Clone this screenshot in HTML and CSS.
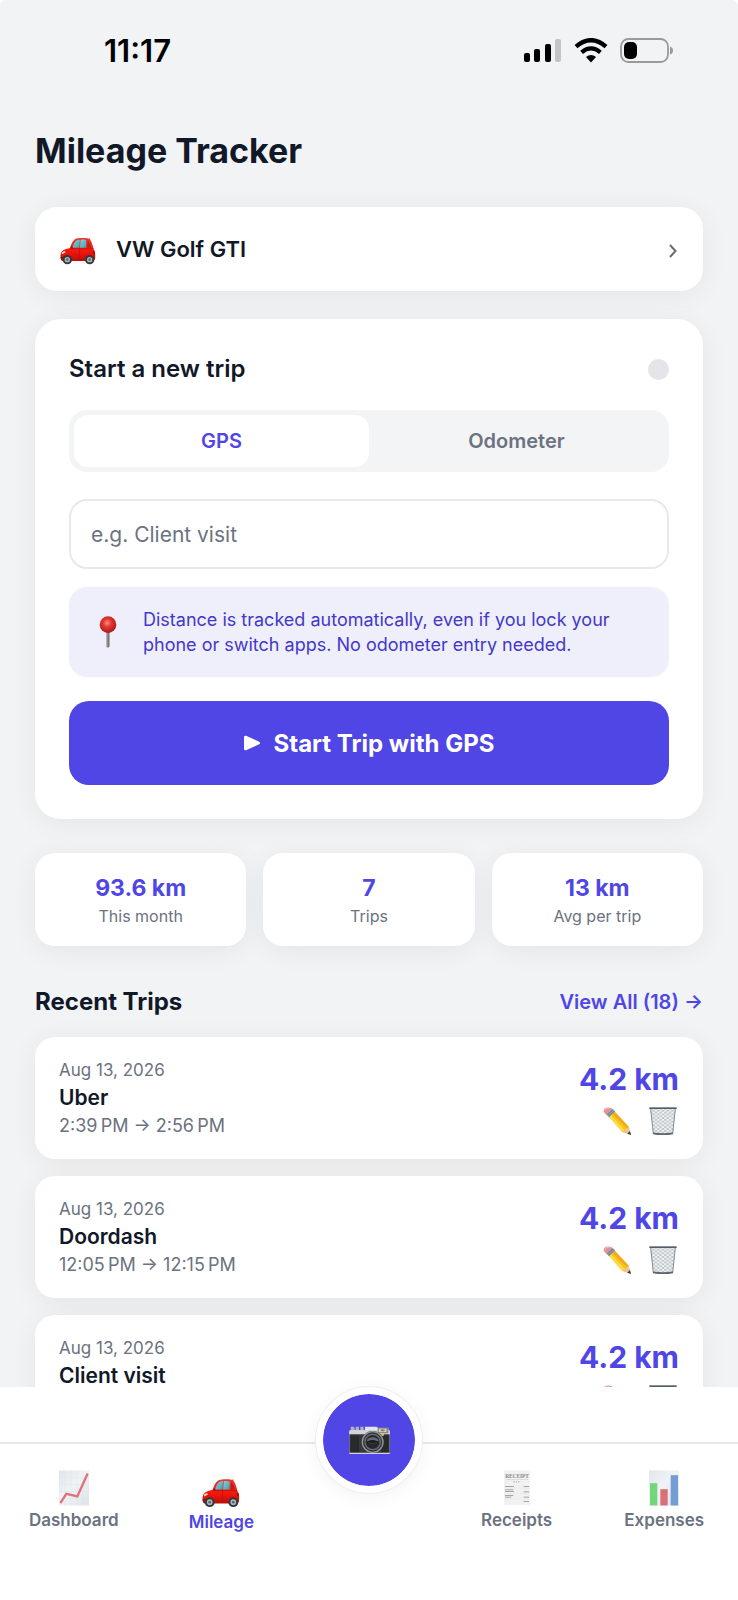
FILE: index.html
```html
<!DOCTYPE html>
<html lang="en">
<head>
<meta charset="utf-8">
<meta name="viewport" content="width=device-width, initial-scale=1">
<title>Mileage Tracker</title>
<link rel="stylesheet" href="styles.css">
</head>
<body>
<svg class="sprite" aria-hidden="true">
  <defs>
    <linearGradient id="red" x1="0" y1="0" x2="0" y2="1"><stop offset="0" stop-color="#e8392c"/><stop offset=".6" stop-color="#f3150c"/><stop offset="1" stop-color="#b90f0a"/></linearGradient>
    <linearGradient id="glass" x1="0" y1="0" x2="1" y2="1"><stop offset="0" stop-color="#8fd0d6"/><stop offset="1" stop-color="#3f9fb4"/></linearGradient>
    <radialGradient id="pinhead" cx=".45" cy=".4" r=".6"><stop offset="0" stop-color="#ff8d80"/><stop offset=".4" stop-color="#e23a35"/><stop offset="1" stop-color="#b3161a"/></radialGradient>
    <linearGradient id="paper" x1="0" y1="0" x2="1" y2="1"><stop offset="0" stop-color="#dfe6ec"/><stop offset=".45" stop-color="#f0f3f6"/><stop offset="1" stop-color="#dfe3e8"/></linearGradient>
    <pattern id="mesh" width="14" height="11" patternUnits="userSpaceOnUse"><path d="M0 0L14 11M14 0L0 11" stroke="#8b949c" stroke-width="1.6"/></pattern>
  </defs>
  <symbol id="car" viewBox="0 0 108 82">
    <path d="M88 2v12" stroke="#a33" stroke-width="2"/>
    <path d="M2 60C0 46 6 38 18 35L30 32C36 14 42 4 54 3C68 1 84 2 90 6C96 16 99 28 101 36C107 44 106 58 105 66L100 71H6C3 69 2 65 2 60Z" fill="url(#red)"/>
    <path d="M37 31C42 16 47 8 56 7L60 7L58 31Z" fill="url(#glass)"/>
    <path d="M62 7C71 6 76 7 79 9L78 31H60Z" fill="url(#glass)"/>
    <path d="M83 10C88 13 91 23 92 31H82Z" fill="#b9201b"/>
    <path d="M32 34H100M59 34L57 66H83" stroke="#b3130d" stroke-width="2" fill="none"/>
    <path d="M32 30l4-4 3 7-5 2Z" fill="#8e1712"/>
    <path d="M5 45l9-4 3 4-10 6Z" fill="#ffd6bd"/>
    <path d="M99 40l5 2 1 9-5-2Z" fill="#8d100c"/>
    <path d="M1 59h12v7H3Z" fill="#69201e"/>
    <circle cx="22" cy="67" r="14" fill="#34383c"/><circle cx="22" cy="67" r="8" fill="#aebabd"/><circle cx="22" cy="67" r="4" fill="#62696d"/>
    <circle cx="89" cy="67" r="14" fill="#34383c"/><circle cx="89" cy="67" r="8" fill="#aebabd"/><circle cx="89" cy="67" r="4" fill="#62696d"/>
  </symbol>
  <symbol id="pencil" viewBox="0 0 84 84">
    <path d="M18 29L34 13L77 59L83 83L58 75Z" fill="#f7c51b"/>
    <path d="M28 20L34 13L77 59L72 64Z" fill="#f2a91b"/>
    <path d="M18 29L23 24L65 69L58 75Z" fill="#ffda45"/>
    <path d="M58 75L65 69L72 64L77 59L83 83Z" fill="#ebc596"/>
    <path d="M73 80l8-8 3 12Z" fill="#3c3a38"/>
    <path d="M8 20L25 3L36 13L18 31Z" fill="#8d9eaf"/>
    <path d="M13 25L30 8M17 29L34 12" stroke="#596a7c" stroke-width="2"/>
    <path d="M2 14C1 5 10 0 20 2L27 7L9 23Z" fill="#e98e94"/>
    <path d="M5 11Q10 3 18 4" stroke="#f7bfc0" stroke-width="3" fill="none"/>
  </symbol>
  <symbol id="trash" viewBox="0 0 84 84">
    <path d="M4 5H80L72 80Q42 87 12 80Z" fill="#f5f6f7"/>
    <path d="M4 5H80L72 80Q42 87 12 80Z" fill="url(#mesh)"/>
    <path d="M5 5L13 80M79 5L71 80" stroke="#848c94" stroke-width="3"/>
    <path d="M12 79Q42 84 72 79" stroke="#5d6770" stroke-width="5" fill="none"/>
    <path d="M1 1H83V6H1Z" fill="#535d66"/>
  </symbol>
</svg>
<div class="app">
  <main class="screen">
    <div class="status">
      <span class="status__time">11:17</span>
      <div class="status__icons">
        <svg width="38" height="25" viewBox="0 0 38 25" aria-label="Signal"><rect x="0" y="15" width="6" height="9" rx="2"/><rect x="10" y="11" width="6" height="13" rx="2"/><rect x="21" y="6" width="6" height="18" rx="2"/><rect x="31" y="1" width="6" height="23" rx="2" fill="#c3c4c6"/></svg>
        <svg width="34" height="25" viewBox="0 0 34 25" fill="none" stroke="#000" aria-label="Wi-Fi"><path d="M2 8.6Q17-4.2 32 8.6" stroke-width="4.4"/><path d="M7.6 14.3Q17 6.6 26.4 14.3" stroke-width="4.2"/><path d="M12 19Q17 15 22 19L17 24.4Z" fill="#000" stroke="none"/></svg>
        <svg width="54" height="25" viewBox="0 0 54 25" aria-label="Battery"><rect x="1" y="1" width="47" height="23" rx="7.5" fill="none" stroke="#999a9c" stroke-width="1.8"/><rect x="4" y="4" width="13" height="17" rx="5"/><path d="M50 8.500Q53 9.500 53 12.500T50 16.500Z" fill="#999a9c"/></svg>
      </div>
    </div>

    <h1 class="title">Mileage Tracker</h1>

    <button class="vehicle card" type="button">
      <svg class="vehicle__icon" aria-hidden="true"><use href="#car"/></svg>
      <span class="vehicle__name">VW Golf GTI</span>
      <svg class="vehicle__chevron" viewBox="0 0 8 14" aria-hidden="true"><path d="M1 1L6.500 7L1 13" fill="none" stroke="#6b6b78" stroke-width="2"/></svg>
    </button>

    <form class="trip card">
      <div class="trip__head">
        <h2 class="heading heading--card">Start a new trip</h2>
        <span class="trip__dot"></span>
      </div>
      <div class="tabs" role="tablist">
        <button class="tabs__item tabs__item--on" type="button" role="tab" aria-selected="true">GPS</button>
        <button class="tabs__item" type="button" role="tab" aria-selected="false">Odometer</button>
      </div>
      <input class="trip__input" type="text" aria-label="Trip purpose" placeholder="e.g. Client visit">
      <div class="note">
        <svg class="note__pin" viewBox="0 0 102 96" aria-hidden="true"><path d="M46 48h9v44q-4 5-9 0Z" fill="#96908f"/><path d="M52 48h3v44l-3 2Z" fill="#6d6666"/><circle cx="51" cy="26" r="25" fill="url(#pinhead)"/></svg>
        <p class="note__text">Distance is tracked automatically, even if you lock your phone or switch apps. No odometer entry needed.</p>
      </div>
      <button class="start" type="button">
        <svg class="start__icon" viewBox="0 0 16 16" aria-hidden="true"><path d="M1.500 2.200V13.800L14.500 8Z" fill="#fff" stroke="#fff" stroke-width="3" stroke-linejoin="round"/></svg>
        Start Trip with GPS
      </button>
    </form>

    <section class="stats">
      <div class="stat card"><strong class="stat__value">93.6 km</strong><span class="stat__label">This month</span></div>
      <div class="stat card"><strong class="stat__value">7</strong><span class="stat__label">Trips</span></div>
      <div class="stat card"><strong class="stat__value">13 km</strong><span class="stat__label">Avg per trip</span></div>
    </section>

    <div class="recent">
      <h2 class="heading">Recent Trips</h2>
      <a class="recent__all" href="#trips">View All (18) →</a>
    </div>

    <ul class="list" id="trips">
      <li class="entry card">
        <div><p class="entry__date">Aug 13, 2026</p><h3 class="entry__name">Uber</h3><p class="entry__time">2:39&#8239;PM → 2:56&#8239;PM</p></div>
        <div class="entry__side"><strong class="entry__km">4.2 km</strong>
          <div class="entry__tools"><button class="tool" type="button" aria-label="Edit"><svg class="tool__icon"><use href="#pencil"/></svg></button><button class="tool" type="button" aria-label="Delete"><svg class="tool__icon"><use href="#trash"/></svg></button></div></div>
      </li>
      <li class="entry card">
        <div><p class="entry__date">Aug 13, 2026</p><h3 class="entry__name">Doordash</h3><p class="entry__time">12:05&#8239;PM → 12:15&#8239;PM</p></div>
        <div class="entry__side"><strong class="entry__km">4.2 km</strong>
          <div class="entry__tools"><button class="tool" type="button" aria-label="Edit"><svg class="tool__icon"><use href="#pencil"/></svg></button><button class="tool" type="button" aria-label="Delete"><svg class="tool__icon"><use href="#trash"/></svg></button></div></div>
      </li>
      <li class="entry card">
        <div><p class="entry__date">Aug 13, 2026</p><h3 class="entry__name">Client visit</h3><p class="entry__time">&nbsp;</p></div>
        <div class="entry__side"><strong class="entry__km">4.2 km</strong>
          <div class="entry__tools"><button class="tool" type="button" aria-label="Edit"><svg class="tool__icon"><use href="#pencil"/></svg></button><button class="tool" type="button" aria-label="Delete"><svg class="tool__icon"><use href="#trash"/></svg></button></div></div>
      </li>
    </ul>
  </main>

  <nav class="nav">
    <div class="nav__bar">
      <a class="nav__item" href="#dashboard">
        <svg class="nav__icon" viewBox="0 0 90 105" aria-hidden="true"><path d="M0 0H90V105H0Z" fill="url(#paper)"/><path d="M18 0V105M36 0V105M54 0V105M72 0V105M0 21H90M0 42H90M0 63H90M0 84H90" stroke="#dfe5ea" stroke-width="1"/><path d="M4 98L22 70L55 78L86 9" fill="none" stroke="#dd7479" stroke-width="7"/></svg>
        Dashboard
      </a>
      <a class="nav__item nav__item--on" href="#mileage" aria-current="page">
        <svg class="nav__icon nav__icon--on" aria-hidden="true"><use href="#car"/></svg>
        Mileage
      </a>
      <span class="nav__gap"></span>
      <a class="nav__item" href="#receipts">
        <svg class="nav__icon" viewBox="0 0 90 105" aria-hidden="true"><path d="M6 0H84V105L78 102L72 105L66 102L60 105L54 102L48 105L42 102L36 105L30 102L24 105L18 102L12 105L6 102Z" fill="#f1f1f1"/><text x="45" y="22" class="receipt-title" text-anchor="middle">RECEIPT</text><path d="M12 27H78" stroke="#b9b9b9" stroke-width="1"/><path d="M34 34H54" stroke="#aaa" stroke-width="3" stroke-dasharray="4 3"/><path d="M9 48H36M9 58H34M9 63H36M9 75H34M9 80H28M65 48H81M65 64H81M65 80H81M65 93H81" stroke="#a5a5a5" stroke-width="3"/><path d="M9 53H81M9 69H81M9 86H81" stroke="#dedede" stroke-width="1"/></svg>
        Receipts
      </a>
      <a class="nav__item" href="#expenses">
        <svg class="nav__icon" viewBox="0 0 90 105" aria-hidden="true"><path d="M0 0H90V105H0Z" fill="url(#paper)"/><path d="M3 38H25V105H3Z" fill="#73d67d"/><path d="M34 56H56V105H34Z" fill="#dc7077"/><path d="M65 14H87V105H65Z" fill="#749dd3"/></svg>
        Expenses
      </a>
    </div>
    <button class="nav__camera" type="button" aria-label="Scan receipt">
      <svg class="nav__camera-icon" viewBox="0 0 123 84" aria-hidden="true">
        <path d="M5 6Q5 1 12 2Q17 2 17 8V16H5ZM20 2H30V14H20ZM34 2H44V14H34Z" fill="#aeb3ba"/>
        <path d="M48 2H82L88 6H118V18H48Z" fill="#e3e5e8"/>
        <path d="M0 17Q0 12 6 12H120Q123 12 123 17V80Q123 84 119 84H4Q0 84 0 80Z" fill="#d1d4d8"/>
        <path d="M1 25H122V80H1Z" fill="#35373a"/>
        <path d="M5 29H30V77H5ZM98 29H119V77H98Z" fill="#27292b"/>
        <path d="M86 5H118V22H86Z" fill="#8b8982"/><path d="M90 8H112V18H90Z" fill="#ddd9ca"/><path d="M95 10h12v6H95Z" fill="#817f76"/>
        <circle cx="71" cy="48" r="33" fill="#303338"/><circle cx="71" cy="48" r="31" fill="none" stroke="#94989c" stroke-width="4"/>
        <circle cx="71" cy="48" r="23" fill="#25282d" stroke="#6c7074" stroke-width="4"/>
        <ellipse cx="71" cy="43" rx="17" ry="9" fill="#656b71"/><path d="M53 47Q71 37 89 48Q72 55 53 47" fill="#191b20"/>
        <circle cx="101" cy="26" r="4" fill="#e7bd55"/>
      </svg>
    </button>
  </nav>
</div>
</body>
</html>
```

FILE: styles.css
```css
:root {
  --accent: #4f46e5;
  --ink: #111827;
  --muted: #6b7280;
  --line: #e8e9eb;
  --ground: #f2f3f5;
  --gutter: 35px;
}

* { box-sizing: border-box; }

body {
  margin: 0;
  background: #fff;
  color: var(--ink);
  font-family: Inter, "Liberation Sans", sans-serif;
}

h1, h2, h3, p, ul { margin: 0; padding: 0; }

button, input { font: inherit; }

button { border: 0; padding: 0; background: none; cursor: pointer; }

a { text-decoration: none; }

.sprite { position: absolute; width: 0; height: 0; }

.app {
  display: flex;
  flex-direction: column;
  height: 100vh;
}

.screen {
  flex: 1;
  min-height: 0;
  overflow-y: auto;
  scrollbar-width: none;
  padding: 0 var(--gutter) 20px;
  background: var(--ground);
  border-radius: 6px 6px 0 0;
}

.card {
  background: #fff;
  border-radius: 20px;
  box-shadow: 0 4px 28px rgba(0, 0, 0, 0.06);
}

/* Status bar */
.status {
  display: flex;
  align-items: center;
  justify-content: space-between;
  height: 100px;
  padding: 0 29px 0 69px;
}

.status__time { color: #000; font-size: 31px; font-weight: 600; }

.status__icons { display: flex; align-items: center; gap: 12px; }

.title {
  margin: 30px 0 35px;
  font-size: 34px;
  line-height: 42px;
  font-weight: 700;
}

/* Vehicle */
.vehicle {
  display: flex;
  align-items: center;
  gap: 20px;
  width: 100%;
  height: 84px;
  padding: 0 26px 0 25px;
  color: var(--ink);
  border-radius: 22px;
}

.vehicle__icon { width: 36px; height: 32px; padding-top: 4px; }

.vehicle__name {
  flex: 1;
  text-align: left;
  font-size: 22px;
  font-weight: 600;
}

.vehicle__chevron { width: 8px; height: 18px; padding-top: 4px; }

/* New trip */
.trip {
  margin-top: 28px;
  padding: 34px;
  border-radius: 26px;
}

.trip__head {
  display: flex;
  align-items: center;
  justify-content: space-between;
  margin-bottom: 25px;
}

.heading { font-size: 24px; line-height: 32px; font-weight: 700; }

.heading--card { font-weight: 600; }

.trip__dot {
  width: 21px;
  height: 21px;
  border-radius: 50%;
  background: #e4e5e9;
}

.tabs {
  display: grid;
  grid-template-columns: 1fr 1fr;
  height: 62px;
  padding: 5px;
  border-radius: 18px;
  background: #f3f4f6;
}

.tabs__item {
  border-radius: 14px;
  color: var(--muted);
  font-size: 20px;
  font-weight: 600;
}

.tabs__item--on { background: #fff; color: var(--accent); }

.trip__input {
  display: block;
  width: 100%;
  height: 70px;
  margin: 27px 0 18px;
  padding: 0 20px;
  border: 2px solid var(--line);
  border-radius: 18px;
  background: #fff;
  font-size: 21px;
}

.trip__input::placeholder { color: var(--muted); opacity: 1; }

.note {
  display: flex;
  align-items: center;
  gap: 18px;
  padding: 20px 22px;
  border-radius: 18px;
  background: #efeffb;
}

.note__pin { flex: none; width: 34px; height: 32px; }

.note__text { color: #4338ca; font-size: 18px; line-height: 25px; }

.start {
  display: flex;
  align-items: center;
  justify-content: center;
  gap: 14px;
  width: 100%;
  height: 84px;
  margin-top: 24px;
  border-radius: 20px;
  background: var(--accent);
  color: #fff;
  font-size: 24px;
  font-weight: 700;
}

.start__icon { width: 16px; height: 16px; }

/* Figures */
.stats {
  display: grid;
  grid-template-columns: repeat(3, 1fr);
  gap: 17px;
  margin: 34px 0 40px;
}

.stat {
  display: flex;
  flex-direction: column;
  align-items: center;
  padding: 20px 0 17px;
}

.stat__value { color: var(--accent); font-size: 23px; line-height: 30px; font-weight: 700; }

.stat__label { color: var(--muted); font-size: 16px; line-height: 26px; }

/* Trip list */
.recent {
  display: flex;
  align-items: center;
  justify-content: space-between;
  margin-bottom: 19px;
}

.recent__all { color: var(--accent); font-size: 20px; font-weight: 600; }

.list {
  display: flex;
  flex-direction: column;
  gap: 17px;
  list-style: none;
}

.entry {
  display: flex;
  align-items: center;
  justify-content: space-between;
  padding: 20px 24px;
}

.entry__date { color: var(--muted); font-size: 17px; line-height: 27px; }

.entry__name { font-size: 21px; line-height: 28px; font-weight: 600; }

.entry__time { color: var(--muted); font-size: 18px; line-height: 27px; }

.entry__side {
  display: flex;
  flex-direction: column;
  align-items: flex-end;
  gap: 10px;
}

.entry__km { color: var(--accent); font-size: 30px; line-height: 36px; font-weight: 700; }

.entry__tools { display: flex; gap: 14px; }

.tool { display: flex; justify-content: center; width: 32px; height: 28px; }

.tool__icon { width: 28px; height: 28px; }

/* Bottom navigation */
.nav { position: relative; padding-top: 55px; background: #fff; }

.nav__bar {
  display: grid;
  grid-template-columns: repeat(5, 1fr);
  align-items: start;
  padding: 26px 0 66px;
  border-top: 2px solid var(--line);
}

.nav__item {
  display: flex;
  flex-direction: column;
  align-items: center;
  gap: 2px;
  color: var(--muted);
  font-size: 17px;
  line-height: 24px;
  font-weight: 600;
}

.nav__item--on { color: var(--accent); }

.nav__icon { width: 30px; height: 36px; }

.nav__icon--on { width: 38px; height: 38px; padding-top: 8px; }

.receipt-title { font: 700 16px "Liberation Serif", serif; fill: #8b8b8b; }

.nav__camera {
  position: absolute;
  top: 0;
  left: calc(50% - 53px);
  display: flex;
  align-items: center;
  justify-content: center;
  width: 106px;
  height: 106px;
  border: 7px solid #fff;
  border-radius: 50%;
  background: var(--accent);
  background-clip: padding-box;
  box-shadow: 0 0 0 1px #ededf3, 0 4px 20px rgba(0, 0, 0, 0.05);
}

.nav__camera-icon { width: 41px; height: 28px; }
```
